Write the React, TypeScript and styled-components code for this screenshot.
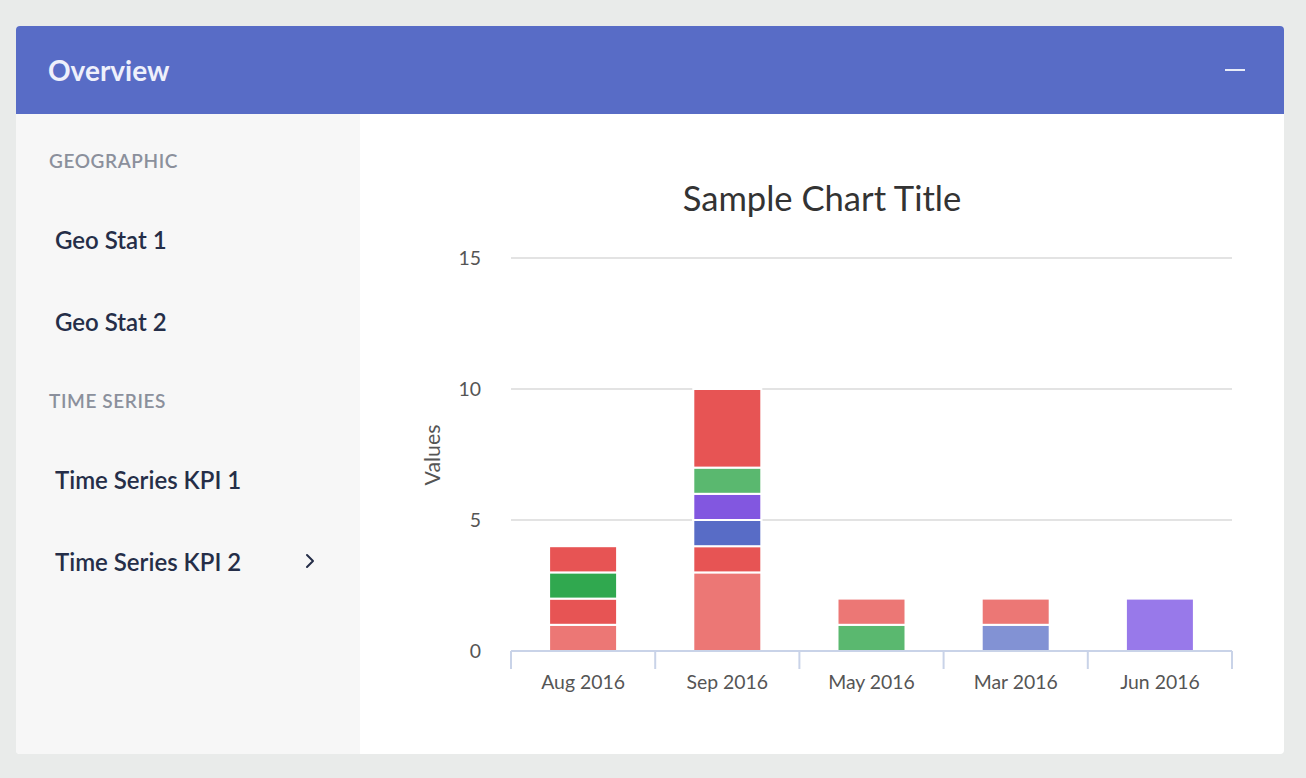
import React from 'react'
import styled, { createGlobalStyle } from 'styled-components'
import { ChevronRight } from 'lucide-react'

const FONT = `Lato, "Noto Sans", "Liberation Sans", sans-serif`

const GlobalStyle = createGlobalStyle`
  html, body {
    margin: 0;
    padding: 0;
    background: #e9ebea;
    font-family: ${FONT};
  }
`

const Page = styled.div`
  width: 1306px;
  height: 778px;
  box-sizing: border-box;
  padding: 26px 22px 24px 16px;
  display: flex;
`

const Card = styled.section`
  flex: 1;
  display: flex;
  flex-direction: column;
  background: #fff;
  border-radius: 4px;
  overflow: hidden;
`

const Header = styled.header`
  height: 88px;
  flex: none;
  display: flex;
  align-items: center;
  justify-content: space-between;
  padding: 0 39px 0 32px;
  background: #586cc6;
`

const HeaderTitle = styled.h2`
  margin: 0;
  font-size: 28px;
  font-weight: 700;
  color: #eef0fb;
`

const Collapse = styled.button`
  width: 20px;
  height: 20px;
  padding: 0;
  border: 0;
  background: transparent;
  display: flex;
  align-items: center;
  cursor: pointer;

  &::before {
    content: '';
    display: block;
    width: 20px;
    height: 2px;
    background: #e8ecf8;
  }
`

const Body = styled.div`
  flex: 1;
  display: flex;
`

const Sidebar = styled.nav`
  width: 344px;
  flex: none;
  box-sizing: border-box;
  padding-top: 8px;
  background: #f7f7f7;
`

const SectionHeading = styled.div`
  height: 76px;
  display: flex;
  align-items: center;
  padding-left: 33px;
  font-size: 19px;
  font-weight: 600;
  letter-spacing: 0.6px;
  color: #8b909c;
`

const NavItem = styled.a<{ $active?: boolean }>`
  height: 82px;
  display: flex;
  align-items: center;
  justify-content: space-between;
  padding: 0 38px 0 39px;
  font-size: 24px;
  font-weight: 600;
  color: #252e48;
  text-decoration: none;
  cursor: pointer;

  svg {
    visibility: ${({ $active }) => ($active ? 'visible' : 'hidden')};
  }
`

const ChartPane = styled.div`
  flex: 1;
  display: flex;
  flex-direction: column;
  align-items: center;
  padding-top: 64px;
`

const ChartTitle = styled.h3`
  margin: 0;
  height: 40px;
  line-height: 40px;
  font-size: 34.6px;
  font-weight: 400;
  color: #333;
`

const ChartSvg = styled.svg`
  display: block;
  align-self: stretch;
  font-family: ${FONT};
`

const C = {
  red: '#e75454',
  light: '#ec7775',
  green: '#30a84f',
  mint: '#5ab86f',
  blue: '#586cc6',
  violet: '#8257e0',
  periwinkle: '#8292d4',
  lilac: '#9879ea',
}

type Seg = { v: number; c: string }

const data: { label: string; segs: Seg[] }[] = [
  { label: 'Aug 2016', segs: [{ v: 1, c: C.light }, { v: 1, c: C.red }, { v: 1, c: C.green }, { v: 1, c: C.red }] },
  {
    label: 'Sep 2016',
    segs: [
      { v: 3, c: C.light },
      { v: 1, c: C.red },
      { v: 1, c: C.blue },
      { v: 1, c: C.violet },
      { v: 1, c: C.mint },
      { v: 3, c: C.red },
    ],
  },
  { label: 'May 2016', segs: [{ v: 1, c: C.mint }, { v: 1, c: C.light }] },
  { label: 'Mar 2016', segs: [{ v: 1, c: C.periwinkle }, { v: 1, c: C.light }] },
  { label: 'Jun 2016', segs: [{ v: 2, c: C.lilac }] },
]

const X0 = 151
const X1 = 872
const Y0 = 433
const UNIT = 26.2
const BAR = 68

function StackedChart() {
  const step = (X1 - X0) / data.length
  const y = (v: number) => Y0 - v * UNIT
  return (
    <ChartSvg width="924" height="500" viewBox="0 0 924 500">
      {[5, 10, 15].map((t) => (
        <line key={t} x1={X0} x2={X1} y1={y(t)} y2={y(t)} stroke="#e3e3e3" strokeWidth="2" />
      ))}
      {[0, 5, 10, 15].map((t) => (
        <text key={t} x={121} y={y(t) + 7} textAnchor="end" fontSize="19.4" fill="#555">
          {t}
        </text>
      ))}
      <text x={80} y={237} transform="rotate(-90 80 237)" textAnchor="middle" fontSize="21.3" fill="#555">
        Values
      </text>
      {data.map((d, i) => {
        const cx = X0 + step * i + step / 2
        let acc = 0
        return (
          <g key={d.label}>
            {d.segs.map((s, j) => {
              const top = y(acc + s.v)
              const h = s.v * UNIT
              acc += s.v
              return <rect key={j} x={cx - BAR / 2} y={top} width={BAR} height={h} fill={s.c} stroke="#fff" strokeWidth="2" />
            })}
            <text x={cx} y={471} textAnchor="middle" fontSize="19.4" fill="#555">
              {d.label}
            </text>
          </g>
        )
      })}
      <line x1={X0} x2={X1} y1={Y0} y2={Y0} stroke="#c9d3e8" strokeWidth="2" />
      {data.map((_, i) => (
        <line key={i} x1={X0 + step * i} x2={X0 + step * i} y1={Y0} y2={Y0 + 18} stroke="#c9d3e8" strokeWidth="2" />
      ))}
      <line x1={X1} x2={X1} y1={Y0} y2={Y0 + 18} stroke="#c9d3e8" strokeWidth="2" />
    </ChartSvg>
  )
}

export default function App() {
  return (
    <Page>
      <GlobalStyle />
      <Card>
        <Header>
          <HeaderTitle>Overview</HeaderTitle>
          <Collapse aria-label="Collapse" />
        </Header>
        <Body>
          <Sidebar>
            <SectionHeading>GEOGRAPHIC</SectionHeading>
            <NavItem>
              Geo Stat 1
              <ChevronRight size={24} strokeWidth={2} />
            </NavItem>
            <NavItem>
              Geo Stat 2
              <ChevronRight size={24} strokeWidth={2} />
            </NavItem>
            <SectionHeading>TIME SERIES</SectionHeading>
            <NavItem>
              Time Series KPI 1
              <ChevronRight size={24} strokeWidth={2} />
            </NavItem>
            <NavItem $active>
              Time Series KPI 2
              <ChevronRight size={24} strokeWidth={2} />
            </NavItem>
          </Sidebar>
          <ChartPane>
            <ChartTitle>Sample Chart Title</ChartTitle>
            <StackedChart />
          </ChartPane>
        </Body>
      </Card>
    </Page>
  )
}
